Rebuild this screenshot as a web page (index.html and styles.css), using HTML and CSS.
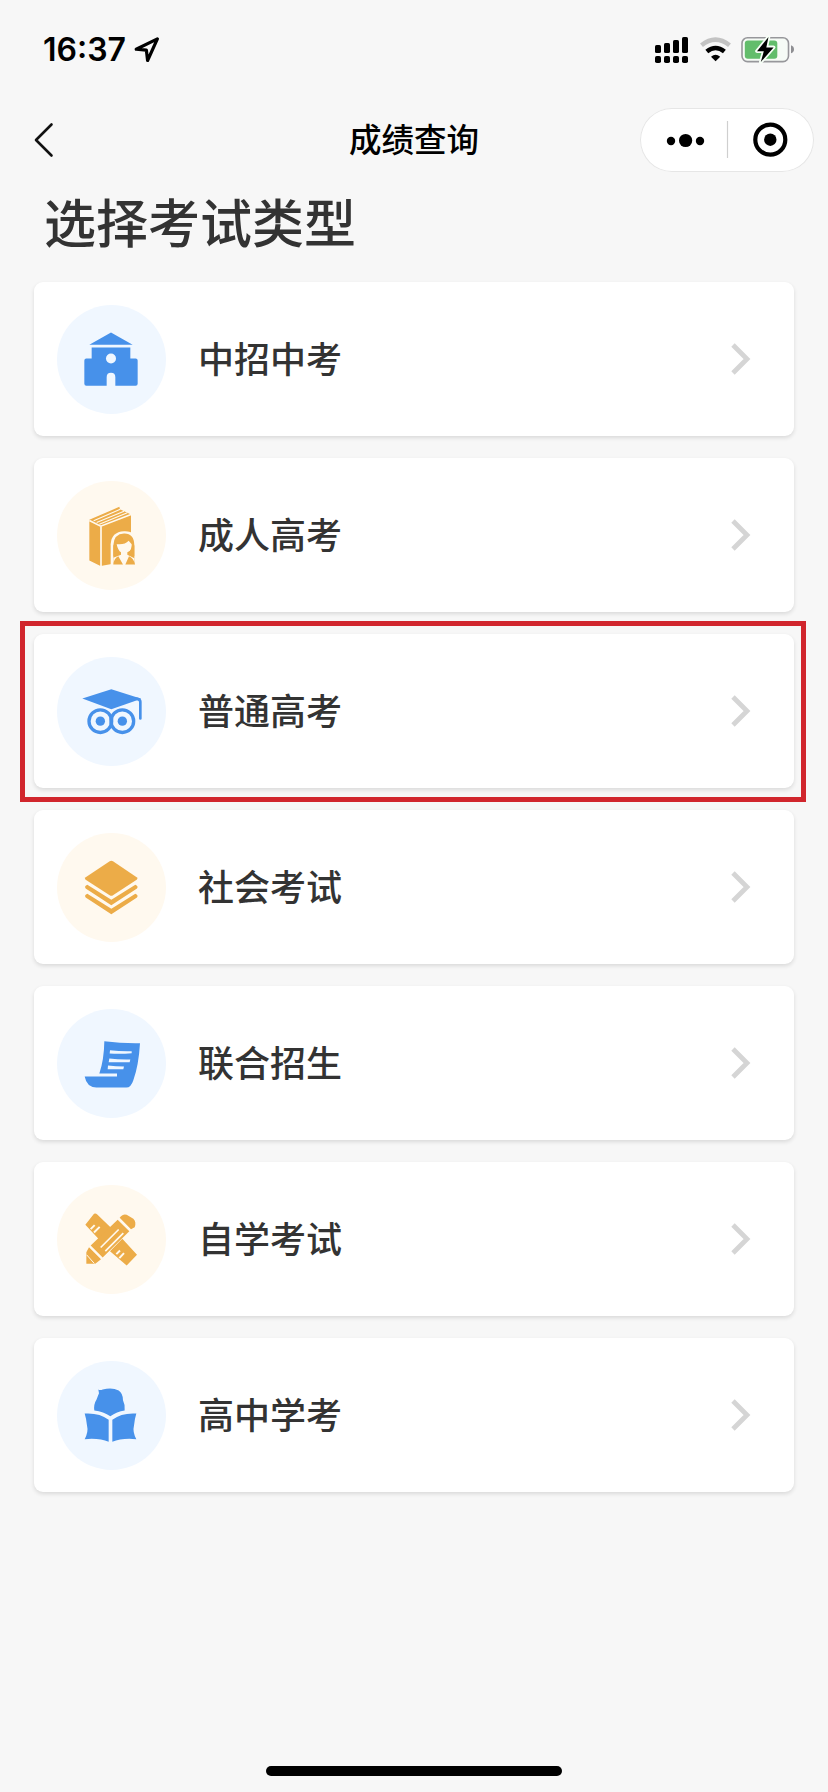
FILE: index.html
```html
<!DOCTYPE html>
<html lang="zh-CN">
<head>
<meta charset="utf-8">
<title>成绩查询</title>
<link rel="stylesheet" href="styles.css">
</head>
<body>
<div class="screen">
  <header class="status">
    <span class="time">16:37</span>
    <svg class="locate" width="26" height="26" viewBox="0 0 26 26"><path d="M23.4 1.9 2.2 12.2l10.2 1 1.2 10.3z" fill="none" stroke="#000" stroke-width="3.2" stroke-linejoin="round"/></svg>
    <svg class="signals" width="144" height="30" viewBox="650 34 144 30">
      <g fill="#000">
        <rect x="655" y="45" width="6" height="8" rx="1.6"/><rect x="664" y="43" width="6" height="10" rx="1.6"/><rect x="673" y="40" width="6" height="13" rx="1.6"/><rect x="682" y="37" width="6" height="16" rx="1.6"/>
        <rect x="655" y="56" width="6" height="7" rx="1.8"/><rect x="664" y="56" width="6" height="7" rx="1.8"/><rect x="673" y="56" width="6" height="7" rx="1.8"/><rect x="682" y="56" width="6" height="7" rx="1.8"/>
      </g>
      <path d="M701.5 45.2q14-11.2 28 0" fill="none" stroke="#c3c3c3" stroke-width="4.6"/>
      <path d="M706.8 51.5q8.8-7 17.6 0" fill="none" stroke="#000" stroke-width="4.6"/>
      <path d="M711 56.8q4.6-4.200 9.200 0l-4.600 4.500z" fill="#000"/>
      <rect x="742" y="37.800" width="46.500" height="23.800" rx="5.500" fill="#f6fbf6" stroke="#97979b" stroke-width="1.600"/>
      <rect x="744.800" y="40.600" width="32.500" height="18.200" rx="3" fill="#62bd6b"/>
      <path d="M791 45.200q3 1 3 4t-3 4z" fill="#8e8e92"/>
      <path d="M768.500 37 757 51.200h6.800L760.800 62l12.800-14.600h-7.300z" fill="#000" stroke="#f7fff7" stroke-width="3.600" paint-order="stroke" stroke-linejoin="round"/>
    </svg>
  </header>
  <nav class="navbar">
    <svg class="back" width="20" height="36" viewBox="0 0 20 36"><path d="M17.500 2.500 2 18l15.500 15.500" fill="none" stroke="#111" stroke-width="2.600" stroke-linejoin="round" stroke-linecap="round"/></svg>
    <span class="nav-title">成绩查询</span>
    <div class="capsule">
      <svg width="174" height="64" viewBox="640 108 174 64">
        <circle cx="671" cy="141" r="4.200"/><circle cx="685.600" cy="140.500" r="6.600"/><circle cx="700" cy="141" r="4.200"/>
        <path d="M727.500 121v37" stroke="#cfcfcf" stroke-width="1.200"/>
        <circle cx="770.300" cy="139.700" r="15" fill="none" stroke="#000" stroke-width="4.200"/><circle cx="770.300" cy="139.700" r="6.200"/>
      </svg>
    </div>
  </nav>
  <h1 class="heading">选择考试类型</h1>
  <main class="list">
    <a class="card">
      <svg class="icon blue" viewBox="111 103.500 327 327">
        <path d="M273 186 338 223H208zM215 231H331V264H347q6 0 6 6V340q0 6-6 6H286V320q0-13-13-13t-13 13V346H199q-6 0-6-6V270q0-6 6-6H215z"/><circle class="hole" cx="273" cy="264" r="15"/>
      </svg>
      <span class="label">中招中考</span>
      <svg class="arrow" viewBox="0 0 20 32"><path d="M2 2 16 16 2 30"/></svg>
    </a>
    <a class="card">
      <svg class="icon amber" viewBox="21 31.500 327 327">
        <path d="M118 148 208 109 210 116 243 132V270L156 286 150 286 118 270z"/>
        <path class="line" d="M118 150 152 167 243 132M153 167V288" stroke-width="5"/>
        <path class="line" d="M131 151 211 116M140 156 222 122M148 161 232 127" stroke-width="3.500"/>
        <path class="hole" d="M182 288V221q2-37 40-39t38 39V288z"/>
        <path d="M190 281V224q2-34 32-35t31 35V281z"/>
        <path class="hole" d="M200 221q24 3 36-10l9 10v10q-4 12-13 14v8l21 10V288H190V262l23-9v-8q-9-5-13-24z"/>
        <path d="M190 282q2-20 15-25l14 25zM226 282l11-25q14 5 18 25zM190 225h8q2 18 10 24-8 6-18 9zM253 225h-7q-2 14-10 22 8 8 17 10z"/>
      </svg>
      <span class="label">成人高考</span>
      <svg class="arrow" viewBox="0 0 20 32"><path d="M2 2 16 16 2 30"/></svg>
    </a>
    <a class="card">
      <svg class="icon blue" viewBox="21 19.500 327 327">
        <path d="M97 144 184 116 274 145 184 176z"/>
        <path class="stroke" d="M220 141 262 145Q271 147 271 154V204" stroke-width="8" stroke-linecap="round"/>
        <g class="stroke" stroke-width="10"><circle cx="151" cy="212" r="34"/><circle cx="217" cy="212" r="34"/></g>
        <circle cx="151" cy="212" r="14"/><circle cx="217" cy="212" r="14"/>
      </svg>
      <span class="label">普通高考</span>
      <svg class="arrow" viewBox="0 0 20 32"><path d="M2 2 16 16 2 30"/></svg>
      <span class="highlight"></span>
    </a>
    <a class="card">
      <svg class="icon amber" viewBox="21 37.500 327 327">
        <path d="M179 122q5-3 10 0L260 170q5 4 0 8L189 224q-5 3-10 0L107 178q-5-4 0-8z"/>
        <path d="M112 193 184 238 256 193 261 196q4 4 0 8L184 254 107 204q-4-4 0-8z"/>
        <path d="M112 220 184 265 256 220 261 223q4 4 0 8L184 281 107 231q-4-4 0-8z"/>
      </svg>
      <span class="label">社会考试</span>
      <svg class="arrow" viewBox="0 0 20 32"><path d="M2 2 16 16 2 30"/></svg>
    </a>
    <a class="card">
      <svg class="icon blue" viewBox="21 25.500 327 327">
        <path d="M163 122Q216 129 270 128Q266 195 250 239Q243 261 229 261H139Q110 260 104 228H201V219H148Q162 178 163 122z"/>
        <path class="hole" d="M180 149Q212 153 245 152V158Q212 161 179 159zM178 174Q209 178 241 177L239 185H176zM174 195Q198 198 222 198L220 206H173z"/>
      </svg>
      <span class="label">联合招生</span>
      <svg class="arrow" viewBox="0 0 20 32"><path d="M2 2 16 16 2 30"/></svg>
    </a>
    <a class="card">
      <svg class="icon amber" viewBox="21 28.500 327 327">
        <path d="M106 148 132 115q5-3 9 1L183 157 157 184 148 193zM217 190 261 238 230 270 180 227z"/>
        <path class="line" d="M122 161 134 149M132 171 149 154M199 236 210 225M208 248 222 233" stroke-width="6"/>
        <path d="M213 122q8-8 17-4L250 130q10 10 4 25L243 161 209 127zM203 133 238 167 158 246 122 210zM117 215 153 251 136 265H109V230z"/>
        <path class="line" d="M152 216 206 162M166 227 220 173" stroke-width="5"/>
        <path class="line" d="M110 238 133 264" stroke-width="3"/>
      </svg>
      <span class="label">自学考试</span>
      <svg class="arrow" viewBox="0 0 20 32"><path d="M2 2 16 16 2 30"/></svg>
    </a>
    <a class="card">
      <svg class="icon blue" viewBox="21 31.500 327 327">
        <path d="M145 117Q151 120 158 117Q187 110 206 120Q219 129 219 149Q226 163 224 180Q200 184 181 197Q161 184 133 180Q130 162 140 146Q144 135 147 128z"/>
        <path d="M104 189Q148 186 176 208V274Q148 262 104 266Q116 244 111 225Q109 205 104 189zM259 189Q215 186 187 208V274Q215 262 259 266Q247 244 252 225Q254 205 259 189z"/>
      </svg>
      <span class="label">高中学考</span>
      <svg class="arrow" viewBox="0 0 20 32"><path d="M2 2 16 16 2 30"/></svg>
    </a>
  </main>
  <div class="home-bar"></div>
</div>
</body>
</html>
```
FILE: styles.css
```css
* { box-sizing: border-box; }
body {
  margin: 0;
  background: #f7f7f7;
  font-family: "Noto Sans CJK SC", sans-serif;
}
.screen {
  width: 828px;
  height: 1792px;
  display: flex;
  flex-direction: column;
  overflow: hidden;
}
.status {
  height: 100px;
  padding: 0 34px 0 43px;
  display: flex;
  align-items: center;
}
.time {
  font: 600 32px/40px Inter, sans-serif;
  width: 91px;
  white-space: nowrap;
}
.locate { display: block; }
.signals { margin-left: auto; margin-top: -2px; }
.navbar {
  height: 80px;
  padding: 0 14px 0 34px;
  display: grid;
  grid-template-columns: 174px 1fr 174px;
  align-items: center;
}
.nav-title {
  font-size: 32.500px;
  line-height: 48px;
  font-weight: 500;
  text-align: center;
  padding: 0 20px 4px 0;
  color: #000;
}
.capsule {
  width: 174px;
  height: 64px;
  border-radius: 32px;
  background: #fff;
  box-shadow: inset 0 0 0 1px #e6e6e6;
}
.capsule svg { display: block; }
.heading {
  margin: 0;
  height: 102px;
  padding: 3px 0 0 44px;
  font-size: 52px;
  line-height: 76px;
  font-weight: 500;
  color: #333;
}
.list {
  padding: 0 34px;
  display: flex;
  flex-direction: column;
  gap: 22px;
}
.card {
  position: relative;
  height: 154px;
  padding: 0 43px 0 23px;
  display: flex;
  align-items: center;
  background: #fff;
  border-radius: 9px;
  box-shadow: 0 2px 4px rgba(0, 0, 0, .12);
}
.icon {
  width: 109px;
  height: 109px;
  border-radius: 50%;
}
.blue { background: #f0f7ff; fill: #4791ea; --ink: #4791ea; --bg: #f0f7ff; }
.amber { background: #fff9ef; fill: #ecac48; --ink: #ecac48; --bg: #fff9ef; }
.hole { fill: var(--bg); }
.line { fill: none; stroke: var(--bg); }
.stroke { fill: none; stroke: var(--ink); }
.label {
  margin-left: 32px;
  padding-bottom: 4px;
  font-size: 36px;
  line-height: 52px;
  font-weight: 500;
  color: #333;
}
.arrow {
  width: 20px;
  height: 32px;
  margin-left: auto;
  fill: none;
  stroke: #d5d5d5;
  stroke-width: 4.800;
}
.highlight {
  position: absolute;
  left: -14px;
  top: -13px;
  width: 786px;
  height: 181px;
  border: 5px solid #d1262d;
}
.home-bar {
  width: 296px;
  height: 10px;
  margin: auto auto 16px;
  border-radius: 5px;
  background: #000;
}
```
